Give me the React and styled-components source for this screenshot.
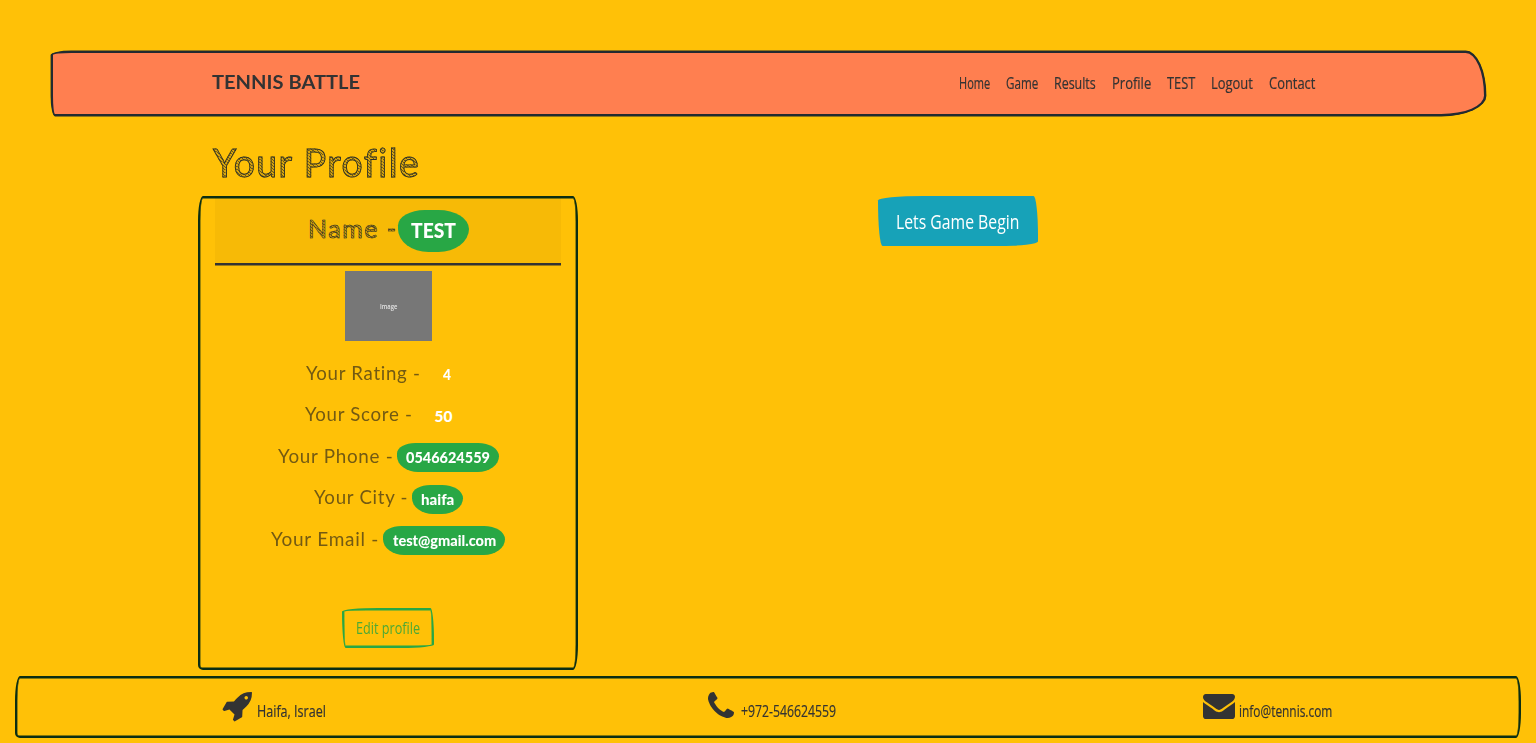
import React, { useLayoutEffect, useRef, useState } from 'react';
import styled, { createGlobalStyle, css } from 'styled-components';

const GlobalStyle = createGlobalStyle`
  *, *::before, *::after { box-sizing: border-box; }
  body {
    margin: 0;
    background: #ffc107;
    color: #333;
    font-family: "Open Sans", "Noto Sans", sans-serif;
    font-size: 16px;
    font-variant-ligatures: none;
    overflow: hidden;
  }
  h1, h4, h5, p { margin: 0; font-weight: 400; }
  a { color: inherit; text-decoration: none; }
`;

const FitBox = styled.span`
  display: inline-block;
  flex: none;
  white-space: nowrap;
  text-align: left;
  width: ${(p) => p.$w}px;
`;
const FitInner = styled.span`
  display: inline-block;
  transform-origin: 0 50%;
`;

/* Narrows or widens a line of text to the width of its hand-drawn lettering. */
function Fit({ w, children }) {
  const ref = useRef(null);
  const [scale, setScale] = useState(1);
  useLayoutEffect(() => {
    if (ref.current) setScale(w / ref.current.offsetWidth);
  }, [w, children]);
  return (
    <FitBox $w={w}>
      <FitInner ref={ref} style={{ transform: `scaleX(${scale})` }}>{children}</FitInner>
    </FitBox>
  );
}

const sketchFrame = css`
  border: 2px solid #0b2e13;
  box-shadow: inset 0 0 0 0.4px #0b2e13;
  border-radius: 5px 5px 5px 5px / 25px 25px 25px 5px;
`;
const sketchButton = css`
  border-radius: 255px 25px 225px 25px / 25px 225px 25px 255px;
`;

const Page = styled.div`
  height: 743px;
  padding: 51px 15px 0;
  display: flex;
  flex-direction: column;
`;
const Navbar = styled.nav`
  flex: none;
  height: 65px;
  margin: 0 35px 0 36px;
  background: #ff7f50;
  border: 2px solid #222b30;
  box-shadow: 0 0 0 0.4px #222b30;
  border-radius: 25px 25px 55px 5px / 5px 55px 25px 25px;
  display: flex;
  align-items: center;
  justify-content: space-between;
  padding: 0 169px 0 159px;
`;
const Brand = styled.a`
  display: flex;
  font-family: Lato, sans-serif;
  font-size: 19px;
  font-weight: 700;
  line-height: 30px;
  margin-top: -4px;
`;
const NavList = styled.div`
  display: flex;
  gap: 16px;
  font-size: 16px;
  font-weight: 500;
  line-height: 24px;
  margin-top: -1px;
  -webkit-text-stroke: 0.2px #333;
`;
const Container = styled.main`
  flex: none;
  width: 1140px;
  height: 560px;
  margin: 0 auto;
`;
const Title = styled.h1`
  height: 80px;
  padding: 16px 0 0 15px;
  font-family: Lato, sans-serif;
  font-size: 38px;
  letter-spacing: 1.5px;
  line-height: 60px;
`;
const Hatched = styled.span`
  color: transparent;
  background: repeating-linear-gradient(35deg, rgba(74, 64, 32, 0.8) 0 0.6px, rgba(74, 64, 32, 0.2) 0.9px 2.4px);
  -webkit-background-clip: text;
  background-clip: text;
  -webkit-text-stroke: ${(p) => p.$stroke}px #2d3026;
`;
const Columns = styled.div`
  display: grid;
  grid-template-columns: 380px 760px;
  align-items: start;
`;
const Card = styled.section`
  ${sketchFrame}
  width: 380px;
  height: 474px;
  padding: 0 15px;
  display: flex;
  flex-direction: column;
  align-items: center;
`;
const CardHeader = styled.header`
  width: 100%;
  height: 67px;
  background: rgba(0, 0, 0, 0.03);
  border-bottom: 2px solid #333;
  box-shadow: 0 0.5px 0 #333;
  display: flex;
  justify-content: center;
  align-items: center;
`;
const NameLabel = styled.h4`
  font-family: Lato, sans-serif;
  font-size: 25px;
  letter-spacing: 1.5px;
  line-height: 32px;
  margin: -6px 0 0 1px;
`;
const Badge = styled.span`
  display: inline-flex;
  flex: none;
  justify-content: center;
  align-items: center;
  width: ${(p) => p.$w}px;
  height: ${(p) => (p.$large ? 42 : 29)}px;
  padding-bottom: ${(p) => (p.$large ? 2 : 1)}px;
  background: ${(p) => (p.$plain ? 'transparent' : '#28a745')};
  color: #fff;
  border-radius: 7rem 8rem 8rem 8rem / 4rem 5rem 6rem 6rem;
  font-family: Lato, sans-serif;
  font-size: ${(p) => (p.$large ? 21 : 15.5)}px;
  font-weight: 900;
  line-height: 20px;
`;
const Photo = styled.div`
  flex: none;
  width: 87px;
  height: 70px;
  margin-top: 6px;
  background: #777;
  color: #e4e4e4;
  display: flex;
  align-items: center;
  justify-content: center;
  font-size: 6.5px;
  font-weight: 600;
`;
const Details = styled.div`
  margin-top: 19px;
  display: flex;
  flex-direction: column;
  align-items: center;
  gap: 12.6px;
`;
const Detail = styled.h5`
  height: 29px;
  display: flex;
  align-items: center;
  font-family: Lato, sans-serif;
  font-size: 18.5px;
  letter-spacing: 0.7px;
  line-height: 25px;
  color: #735a13;
  padding-right: ${(p) => p.$inset}px;
`;
const DetailLabel = styled.span`
  margin: -3px ${(p) => p.$gap}px 0 0;
`;
const BadgeText = styled.span`
  letter-spacing: 0;
`;
const EditButton = styled.a`
  ${sketchButton}
  width: 92px;
  height: 40px;
  margin-top: 53px;
  border: 2px solid #28a745;
  box-shadow: inset 0 0 0 0.4px #28a745;
  color: #4ba936;
  display: flex;
  align-items: center;
  justify-content: center;
  font-size: 16px;
`;
const PlayButton = styled.a`
  ${sketchButton}
  width: 160px;
  height: 50px;
  justify-self: center;
  margin-right: 1px;
  background: #17a2b8;
  color: #fff;
  display: flex;
  align-items: center;
  justify-content: center;
  font-size: 20px;
  font-weight: 500;
`;
const Footer = styled.footer`
  ${sketchFrame}
  flex: none;
  height: 62px;
  padding: 0 187px 0 205px;
  display: flex;
  justify-content: space-between;
`;
const FooterItem = styled.div`
  display: flex;
  align-items: flex-start;
  gap: ${(p) => p.$gap}px;
  margin-left: ${(p) => p.$shift || 0}px;
  font-size: 16px;
  font-weight: 500;
  line-height: 24px;
  -webkit-text-stroke: 0.2px #333;
  padding-top: ${(p) => p.$top}px;
`;
const FooterText = styled.span`
  padding-top: ${(p) => p.$top}px;
`;

const RocketIcon = () => (
  <svg width="30" height="30" viewBox="0 128 1664 1664" fill="#333">
    <path d="M1440 448q0-40-28-68t-68-28-68 28-28 68 28 68 68 28 68-28 28-68zm224-288q0 249-75.500 430.500t-253.500 360.500q-81 80-195 176l-20 379q-2 16-16 26l-384 224q-7 4-16 4-12 0-23-9l-64-64q-13-14-8-32l85-276-281-281-276 85q-3 1-9 1-14 0-23-9l-64-64q-17-19-5-39l224-384q10-14 26-16l379-20q96-114 176-195 188-187 358-258t431-71q14 0 24 9.500t10 22.500z" />
  </svg>
);
const PhoneIcon = () => (
  <svg width="26" height="26" viewBox="0 0 1408 1408" fill="#333">
    <path d="M1408 1112q0 27-10 70.500t-21 68.500q-21 50-122 106-94 51-186 51-27 0-53-3.500t-57.500-12.500-47-14.500-55.500-20.500-49-18q-98-35-175-83-127-79-264-216t-216-264q-48-77-83-175-3-9-18-49t-20.500-55.500-14.500-47-12.500-57.500-3.500-53q0-92 51-186 56-101 106-122 25-11 68.500-21t70.500-10q14 0 21 3 18 6 53 76 11 19 30 54t35 63.500 31 53.500q3 4 17.500 25t21.500 35.500 7 28.500q0 20-28.500 50t-62 55-62 53-28.500 46q0 9 5 22.500t8.500 20.500 14 24 11.500 19q76 137 174 235t235 174q2 1 19 11.500t24 14 20.500 8.500 22.500 5q18 0 46-28.500t53-62 55-62 50-28.500q14 0 28.500 7t35.500 21.500 25 17.500q25 15 53.500 31t63.500 35 54 30q70 35 76 53 3 7 3 21z" />
  </svg>
);
const MailIcon = () => (
  <svg width="32" height="25" viewBox="0 0 1792 1408" preserveAspectRatio="none" fill="#333">
    <path d="M1792 454v794q0 66-47 113t-113 47H160q-66 0-113-47T0 1248V454q44 49 101 87 362 246 497 345 57 42 92.500 65.500t94.500 48 110 24.500h2q51 0 110-24.500t94.500-48T1194 886q170-123 498-345 57-39 100-87zM1792 160q0 79-49 151t-122 123q-376 261-468 325-10 7-42.500 30.500t-54 38-52 32.500-57.500 27-50 9h-2q-23 0-50-9t-57.500-27-52-32.500-54-38T639 759q-91-64-262-182.500T172 434q-62-42-117-115.500T0 182q0-78 41.500-130T160 0h1472q65 0 112.500 47T1792 160z" />
  </svg>
);

const links = [
  ['Home', 31], ['Game', 32], ['Results', 42], ['Profile', 39],
  ['TEST', 28], ['Logout', 42], ['Contact', 46],
];
const details = [
  { label: 'Your Rating -', w: 115, value: '4', vw: 8, bw: 26, gap: 13, inset: 10, plain: true },
  { label: 'Your Score -', w: 108, value: '50', vw: 18, bw: 36, gap: 13, inset: 10, plain: true },
  { label: 'Your Phone -', w: 115, value: '0546624559', vw: 84, bw: 102, gap: 4, inset: 0 },
  { label: 'Your City -', w: 94, value: 'haifa', vw: 33, bw: 51, gap: 4, inset: 0 },
  { label: 'Your Email -', w: 108, value: 'test@gmail.com', vw: 103, bw: 122, gap: 4, inset: 0 },
];

export default function App() {
  return (
    <Page>
      <GlobalStyle />
      <Navbar>
        <Brand href="#"><Fit w={148}>TENNIS BATTLE</Fit></Brand>
        <NavList>
          {links.map(([name, w]) => (
            <a key={name} href="#"><Fit w={w}>{name}</Fit></a>
          ))}
        </NavList>
      </Navbar>
      <Container>
        <Title><Fit w={207}><Hatched $stroke={0.9}>Your Profile</Hatched></Fit></Title>
        <Columns>
          <Card>
            <CardHeader>
              <NameLabel><Fit w={90}><Hatched $stroke={0.6}>Name -</Hatched></Fit></NameLabel>
              <Badge $w={71} $large><Fit w={45}>TEST</Fit></Badge>
            </CardHeader>
            <Photo><Fit w={17}>Image</Fit></Photo>
            <Details>
              {details.map((d) => (
                <Detail key={d.label} $inset={d.inset}>
                  <DetailLabel $gap={d.gap}><Fit w={d.w}>{d.label}</Fit></DetailLabel>
                  <Badge $w={d.bw} $plain={d.plain}>
                    <BadgeText><Fit w={d.vw}>{d.value}</Fit></BadgeText>
                  </Badge>
                </Detail>
              ))}
            </Details>
            <EditButton href="#"><Fit w={64}>Edit profile</Fit></EditButton>
          </Card>
          <PlayButton href="#"><Fit w={123}>Lets Game Begin</Fit></PlayButton>
        </Columns>
      </Container>
      <Footer>
        <FooterItem $gap={5} $top={14}>
          <RocketIcon />
          <FooterText $top={7}><Fit w={69}>Haifa, Israel</Fit></FooterText>
        </FooterItem>
        <FooterItem $gap={7} $top={14} $shift={14}>
          <PhoneIcon />
          <FooterText $top={7}><Fit w={95}>+972-546624559</Fit></FooterText>
        </FooterItem>
        <FooterItem $gap={4} $top={16}>
          <MailIcon />
          <FooterText $top={5}><Fit w={93}>info@tennis.com</Fit></FooterText>
        </FooterItem>
      </Footer>
    </Page>
  );
}
